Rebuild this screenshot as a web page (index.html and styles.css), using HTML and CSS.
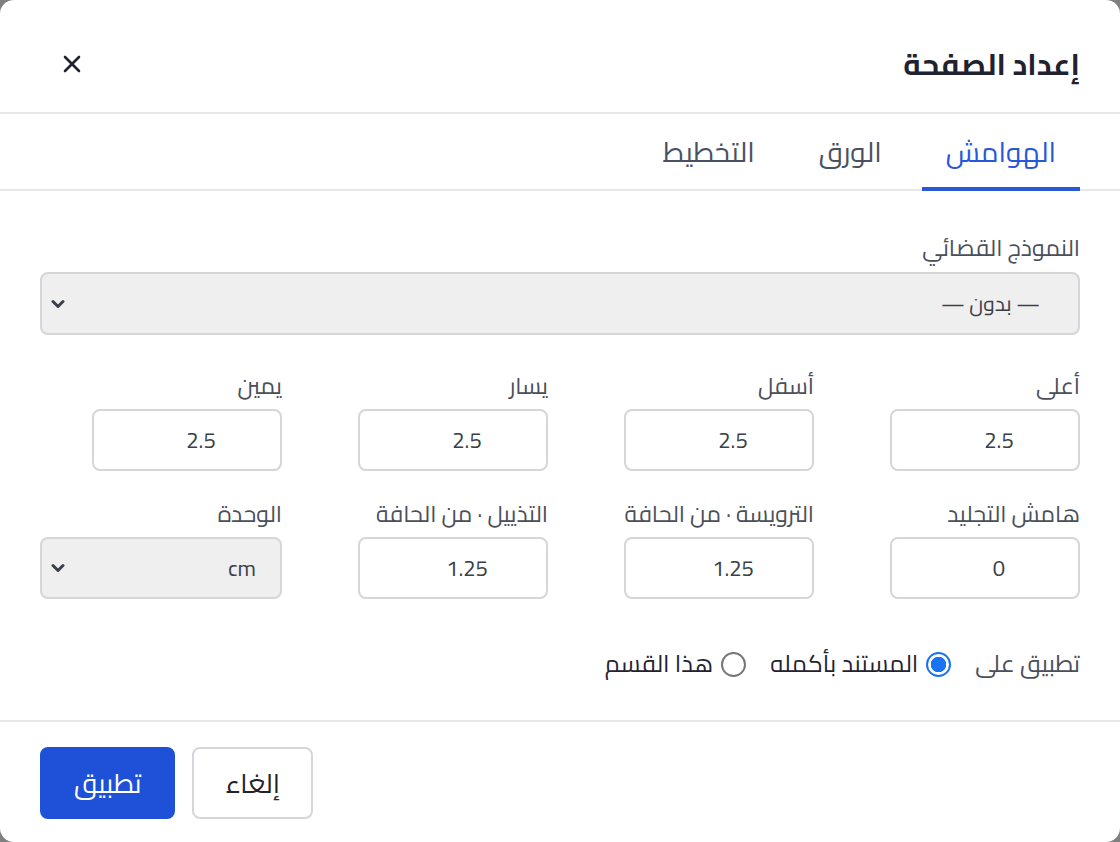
FILE: index.html
```html
<!DOCTYPE html>
<html lang="ar" dir="rtl">
<head>
<meta charset="utf-8">
<title>إعداد الصفحة</title>
<link rel="stylesheet" href="styles.css">
</head>
<body>
<div class="dialog">
  <header class="header">
    <h1 class="title">إعداد الصفحة</h1>
    <button class="close" aria-label="إغلاق">
      <svg width="18" height="18" viewBox="0 0 18 18"><path d="M2 2L16 16M16 2L2 16" stroke="#1f2330" stroke-width="2.6" stroke-linecap="round" fill="none"/></svg>
    </button>
  </header>
  <nav class="tabs">
    <div class="tab active">الهوامش</div>
    <div class="tab">الورق</div>
    <div class="tab">التخطيط</div>
  </nav>
  <main class="content">
    <div class="field full">
      <div class="label">النموذج القضائي</div>
      <div class="select">
        <span>— بدون —</span>
        <svg class="chev" width="14" height="10" viewBox="0 0 14 10"><path d="M2 2.5L7 7.5L12 2.5" stroke="#3a3f4a" stroke-width="3" fill="none" stroke-linecap="round" stroke-linejoin="round"/></svg>
      </div>
    </div>
    <div class="grid">
      <div class="field"><div class="label">أعلى</div><div class="input">2.5</div></div>
      <div class="field"><div class="label">أسفل</div><div class="input">2.5</div></div>
      <div class="field"><div class="label">يسار</div><div class="input">2.5</div></div>
      <div class="field"><div class="label">يمين</div><div class="input">2.5</div></div>
      <div class="field"><div class="label">هامش التجليد</div><div class="input">0</div></div>
      <div class="field"><div class="label">الترويسة · من الحافة</div><div class="input">1.25</div></div>
      <div class="field"><div class="label">التذييل · من الحافة</div><div class="input">1.25</div></div>
      <div class="field"><div class="label">الوحدة</div>
        <div class="select small"><span>cm</span>
          <svg class="chev" width="14" height="10" viewBox="0 0 14 10"><path d="M2 2.5L7 7.5L12 2.5" stroke="#3a3f4a" stroke-width="3" fill="none" stroke-linecap="round" stroke-linejoin="round"/></svg>
        </div>
      </div>
    </div>
    <div class="apply-row">
      <span class="apply-label">تطبيق على</span>
      <label class="opt"><span class="radio checked"></span><span>المستند بأكمله</span></label>
      <label class="opt"><span class="radio"></span><span>هذا القسم</span></label>
    </div>
  </main>
  <footer class="footer">
    <button class="btn">إلغاء</button>
    <button class="btn primary">تطبيق</button>
  </footer>
</div>
</body>
</html>
```
FILE: styles.css
```css
* { box-sizing: border-box; }
html, body { margin: 0; padding: 0; }
body {
  background: #808080;
  font-family: "Cairo", "Noto Sans", sans-serif;
  color: #1f2330;
  height: 842px;
  overflow: hidden;
}
.dialog {
  width: 1120px;
  height: 842px;
  background: #fff;
  border-radius: 14px;
  display: flex;
  flex-direction: column;
}
.header {
  height: 114px;
  padding: 16px 40px 0;
  display: flex;
  align-items: center;
  justify-content: space-between;
  border-bottom: 2px solid #e6e7e9;
}
.title {
  margin: 0;
  font-size: 30px;
  line-height: 40px;
  font-weight: 700;
  color: #1f2330;
}
.close {
  background: none;
  border: 0;
  padding: 0;
  margin-left: 10px;
  width: 44px;
  height: 44px;
  display: flex;
  align-items: center;
  justify-content: center;
}
.tabs {
  display: flex;
  gap: 16px;
  padding: 0 40px;
  height: 77px;
  border-bottom: 2px solid #e6e7e9;
}
.tab {
  padding: 2px 24px 0;
  font-size: 28px;
  line-height: 36px;
  color: #4b5060;
  display: flex;
  align-items: center;
  margin-bottom: -2px;
  border-bottom: 4px solid transparent;
}
.tab.active {
  color: #2758d6;
  border-bottom-color: #2758d6;
}
.content {
  padding: 44px 40px 0;
  flex: 1;
}
.label {
  font-size: 23px;
  line-height: 26px;
  color: #4a4f5a;
  margin-bottom: 10px;
  white-space: nowrap;
}
.field.full .label { margin-bottom: 11px; }
.select {
  height: 63px;
  background: #efefef;
  border: 2px solid #d4d6da;
  border-radius: 8px;
  display: flex;
  align-items: center;
  justify-content: space-between;
  padding: 0 38px 0 9px;
  font-size: 21px;
  line-height: 30px;
  color: #3a3f4a;
}
.select.small { height: 62px; padding-right: 24px; font-size: 22px; }
.grid {
  margin-top: 38px;
  display: grid;
  grid-template-columns: repeat(4, 1fr);
  column-gap: 24px;
  row-gap: 30px;
}
.input {
  width: 190px;
  height: 62px;
  border: 2px solid #d4d6da;
  border-radius: 8px;
  display: flex;
  align-items: center;
  justify-content: center;
  padding-left: 28px;
  font-size: 22px;
  line-height: 30px;
  color: #3a3f4a;
}
.apply-row {
  margin-top: 50px;
  display: flex;
  align-items: center;
  gap: 24px;
  font-size: 24px;
  line-height: 30px;
}
.apply-label { color: #4a4f5a; }
.opt {
  display: flex;
  align-items: center;
  gap: 8px;
  color: #1f2330;
}
.radio {
  width: 25px;
  height: 25px;
  border-radius: 50%;
  border: 2px solid #767676;
  display: inline-block;
  background: #fff;
}
.radio.checked {
  border: 2.5px solid #1a73f0;
  background: radial-gradient(circle, #1a73f0 0 7.5px, #fff 8px);
}
.footer {
  border-top: 2px solid #e6e7e9;
  padding: 25px 40px 23px;
  display: flex;
  gap: 17px;
  justify-content: flex-end;
}
.btn {
  font-family: inherit;
  height: 72px;
  padding: 0 31px;
  border-radius: 8px;
  border: 2px solid #d4d6da;
  background: #fff;
  font-size: 27px;
  line-height: 32px;
  color: #1f2330;
}
.btn.primary {
  background: #1e50d8;
  border-color: #1e50d8;
  color: #fff;
  padding: 0 32px;
}
```
